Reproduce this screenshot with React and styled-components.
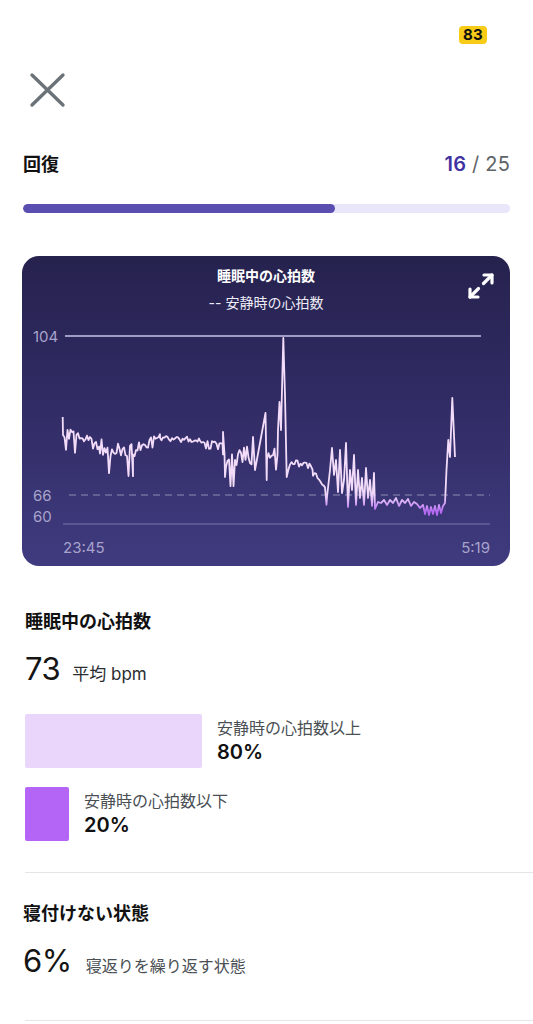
import React, { useMemo } from 'react';
import styled, { createGlobalStyle } from 'styled-components';

const GlobalStyle = createGlobalStyle`
  html, body {
    margin: 0;
    padding: 0;
    background: #ffffff;
  }
  body {
    font-family: Inter, "Noto Sans CJK JP", "Noto Sans", sans-serif;
    color: #111111;
  }
`;

const Page = styled.div`
  width: 533px;
  height: 1024px;
  overflow: hidden;
  display: flex;
  flex-direction: column;
`;

const StatusBar = styled.div`
  height: 54px;
  display: flex;
  justify-content: flex-end;
  align-items: flex-start;
  padding: 26px 46px 0 0;
  box-sizing: border-box;
`;

const Badge = styled.span`
  background: #f8cb17;
  border-radius: 4px;
  padding: 0 4px;
  height: 18px;
  line-height: 18px;
  font-size: 15px;
  font-weight: 700;
  color: #111;
  letter-spacing: 0.3px;
`;

const CloseButton = styled.button`
  border: none;
  background: none;
  padding: 0;
  margin: 17px 0 0 28px;
  width: 38px;
  height: 38px;
  align-self: flex-start;
`;

const Content = styled.div`
  padding: 0 23px;
  display: flex;
  flex-direction: column;
`;

const ScoreRow = styled.div`
  margin-top: 43px;
  display: flex;
  justify-content: space-between;
  align-items: baseline;
`;

const ScoreTitle = styled.h2`
  margin: 0;
  font-size: 18px;
  font-weight: 700;
  line-height: 24px;
`;

const ScoreValue = styled.div`
  font-size: 20px;
  color: #5e6368;
  letter-spacing: 0.2px;
  b {
    font-weight: 600;
    color: #3f33a3;
  }
`;

const Track = styled.div`
  margin-top: 27px;
  height: 9px;
  border-radius: 5px;
  background: #e9e6fa;
  overflow: hidden;
`;

const Fill = styled.div`
  height: 100%;
  background: #5a4eb0;
  border-radius: 5px;
`;

const ChartCard = styled.div`
  position: relative;
  margin: 43px 0 0 -1px;
  height: 310px;
  border-radius: 17px;
  background: linear-gradient(180deg, #26224e 0%, #302b63 45%, #403b7f 100%);
  display: flex;
  flex-direction: column;
  overflow: hidden;
`;

const ChartHeader = styled.div`
  padding-top: 11px;
  padding-bottom: 6px;
  display: flex;
  flex-direction: column;
  align-items: center;
  color: #ffffff;
  font-size: 14px;
  line-height: 18px;
`;

const ChartTitle = styled.div`
  font-weight: 700;
`;

const ChartLegend = styled.div`
  margin-top: 9px;
  color: #eeecf8;
`;

const ExpandIcon = styled.svg`
  position: absolute;
  top: 15px;
  right: 14px;
`;

const Section = styled.div`
  display: flex;
  flex-direction: column;
  padding: 0 ${p => p.$inset}px;
`;

const SectionTitle = styled.h3`
  margin: ${p => p.$top}px 0 0;
  font-size: 18px;
  font-weight: 700;
  line-height: 24px;
`;

const BigStat = styled.div`
  margin-top: ${p => p.$top}px;
  display: flex;
  align-items: baseline;
  gap: ${p => p.$gap}px;
`;

const BigNumber = styled.span`
  font-size: 31px;
  font-weight: 400;
  line-height: 36px;
  color: #151515;
  letter-spacing: -0.5px;
`;

const BigLabel = styled.span`
  font-size: ${p => p.$size}px;
  color: ${p => p.$color};
`;

const Legend = styled.div`
  margin-top: 27px;
  display: flex;
  flex-direction: column;
  gap: 19px;
`;

const LegendRow = styled.div`
  display: flex;
  align-items: flex-start;
  gap: 15px;
`;

const Swatch = styled.div`
  height: 54px;
  border-radius: 2px;
  background: ${p => p.$color};
  flex-shrink: 0;
`;

const LegendText = styled.div`
  display: flex;
  flex-direction: column;
  padding-top: 3px;
`;

const LegendLabel = styled.span`
  font-size: 16px;
  line-height: 22px;
  color: #4a4f54;
`;

const LegendValue = styled.span`
  font-size: 20px;
  font-weight: 600;
  line-height: 27px;
  color: #111;
`;

const Divider = styled.hr`
  border: none;
  border-top: 1px solid #e6e6e8;
  margin: ${p => p.$top}px -23px 0 2px;
`;

// seeded noise so the line stays the same every render
function mulberry32(a) {
  return function () {
    a |= 0; a = (a + 0x6d2b79f5) | 0;
    let t = Math.imul(a ^ (a >>> 15), 1 | a);
    t = (t + Math.imul(t ^ (t >>> 7), 61 | t)) ^ t;
    return ((t ^ (t >>> 14)) >>> 0) / 4294967296;
  };
}

// [x0, x1, yStart, yEnd, noise amplitude] in page coords
const SEGMENTS = [
  [63, 100, 432, 446, 12],
  [100, 133, 447, 452, 18],
  [133, 160, 452, 438, 14],
  [160, 200, 439, 440, 6],
  [200, 223, 441, 443, 5],
  [223, 252, 460, 456, 20],
  [267, 278, 456, 450, 14],
  [290, 313, 462, 467, 8],
  [313, 327, 472, 492, 10],
];

const SPIKES = [
  [62.7, 417], [63, 435],
  [223, 432], [225, 477],
  [253, 437], [255, 470],
  [265.5, 413], [266.7, 480],
  [278, 430], [279.5, 402], [281, 430], [283.3, 338], [285, 395], [286.7, 477], [288.3, 470],
];

const TAIL = [
  [327, 497], [330, 470], [332, 448], [334, 475], [336, 460], [338, 492],
  [340, 450], [342, 493], [344, 480], [346, 443], [348, 507], [350, 470],
  [352, 490], [354, 455], [356, 505], [358, 470], [360, 498], [362, 478],
  [364, 505], [366, 468], [368, 498], [370, 480], [372, 506], [374, 473],
  [375, 509], [378, 502], [381, 503], [384, 500], [387, 505], [390, 500],
  [393, 503], [396, 498], [399, 506], [402, 500], [405, 503], [408, 499],
  [411, 506], [414, 502], [417, 504], [420, 508], [423, 505], [425, 514],
  [427, 506], [429, 515], [431, 507], [433, 514], [435, 506], [437, 515],
  [439, 505], [441, 513], [443, 506], [445, 503], [446.5, 470], [448.3, 440],
  [450, 457], [452.3, 398], [455, 457],
];

function buildLine() {
  const rnd = mulberry32(73);
  const pts = [];
  SEGMENTS.forEach(([x0, x1, y0, y1, amp]) => {
    for (let x = x0; x <= x1; x += 1.5) {
      const t = (x - x0) / (x1 - x0);
      const r = rnd();
      let y = y0 + (y1 - y0) * t + (r - 0.5) * amp;
      if (r > 0.93) y += amp * 0.9;
      pts.push([x, y]);
    }
  });
  SPIKES.concat(TAIL).forEach(p => pts.push(p));
  pts.sort((a, b) => a[0] - b[0]);
  // chart svg origin sits at page (22, 318)
  return pts.map(([x, y], i) => `${i ? 'L' : 'M'}${(x - 22).toFixed(1)} ${(y - 318).toFixed(1)}`).join(' ');
}

const HeartChart = () => {
  const d = useMemo(buildLine, []);
  return (
    <svg width="488" height="242" viewBox="0 0 488 242" style={{ display: 'block' }}>
      <defs>
        <linearGradient id="hr" x1="0" y1="0" x2="0" y2="248" gradientUnits="userSpaceOnUse">
          <stop offset="0.7" stopColor="#f3dcf9" />
          <stop offset="0.73" stopColor="#e4c2f8" />
          <stop offset="0.78" stopColor="#b56af3" />
          <stop offset="1" stopColor="#a855f7" />
        </linearGradient>
      </defs>
      <g fontFamily="Inter, 'Noto Sans', sans-serif" fontSize="15" fill="#a8a3cb">
        <text x="11" y="24">104</text>
        <text x="11" y="183">66</text>
        <text x="11" y="204">60</text>
        <text x="41" y="235">23:45</text>
        <text x="468" y="235" textAnchor="end">5:19</text>
      </g>
      <line x1="43" y1="18" x2="459" y2="18" stroke="#c9c5ec" strokeWidth="1.3" />
      <line x1="47" y1="177" x2="468" y2="177" stroke="#8f8bb4" strokeWidth="1.2" strokeDasharray="7 5" />
      <line x1="41" y1="206" x2="468" y2="206" stroke="#7b76ac" strokeWidth="1.2" />
      <path d={d} fill="none" stroke="url(#hr)" strokeWidth="1.8" strokeLinejoin="round" />
    </svg>
  );
};

const App = () => {
  return (
    <Page>
      <GlobalStyle />
      <StatusBar>
        <Badge>83</Badge>
      </StatusBar>
      <CloseButton aria-label="閉じる">
        <svg width="38" height="38" viewBox="0 0 38 38">
          <path d="M4 4 L35 34 M35 4 L4 34" stroke="#6c7378" strokeWidth="3.4" strokeLinecap="round" />
        </svg>
      </CloseButton>
      <Content>
        <ScoreRow>
          <ScoreTitle>回復</ScoreTitle>
          <ScoreValue><b>16</b> / 25</ScoreValue>
        </ScoreRow>
        <Track>
          <Fill style={{ width: `${(16 / 25) * 100}%` }} />
        </Track>

        <ChartCard>
          <ChartHeader>
            <ChartTitle>睡眠中の心拍数</ChartTitle>
            <ChartLegend>-- 安静時の心拍数</ChartLegend>
          </ChartHeader>
          <ExpandIcon width="30" height="30" viewBox="0 0 30 30" fill="none" stroke="#ffffff" strokeWidth="3.2" strokeLinecap="round" strokeLinejoin="round">
            <path d="M18 4h8v8" />
            <path d="M12 26H4v-8" />
            <path d="M26 4l-8.5 8.5" />
            <path d="M4 26l8.5-8.5" />
          </ExpandIcon>
          <HeartChart />
        </ChartCard>

        <Section $inset={2}>
          <SectionTitle $top={44}>睡眠中の心拍数</SectionTitle>
          <BigStat $top={17} $gap={12}>
            <BigNumber>73</BigNumber>
            <BigLabel $size={17} $color="#2a2d31">平均 bpm</BigLabel>
          </BigStat>
          <Legend>
            <LegendRow>
              <Swatch $color="#ead5fb" style={{ width: 177 }} />
              <LegendText>
                <LegendLabel>安静時の心拍数以上</LegendLabel>
                <LegendValue>80%</LegendValue>
              </LegendText>
            </LegendRow>
            <LegendRow>
              <Swatch $color="#b565f5" style={{ width: 44 }} />
              <LegendText>
                <LegendLabel>安静時の心拍数以下</LegendLabel>
                <LegendValue>20%</LegendValue>
              </LegendText>
            </LegendRow>
          </Legend>
        </Section>

        <Divider $top={31} />

        <Section $inset={0}>
          <SectionTitle $top={29}>寝付けない状態</SectionTitle>
          <BigStat $top={17} $gap={14}>
            <BigNumber>6%</BigNumber>
            <BigLabel $size={16} $color="#4a4f54">寝返りを繰り返す状態</BigLabel>
          </BigStat>
        </Section>

        <Divider $top={41} />
      </Content>
    </Page>
  );
};

export default App;
